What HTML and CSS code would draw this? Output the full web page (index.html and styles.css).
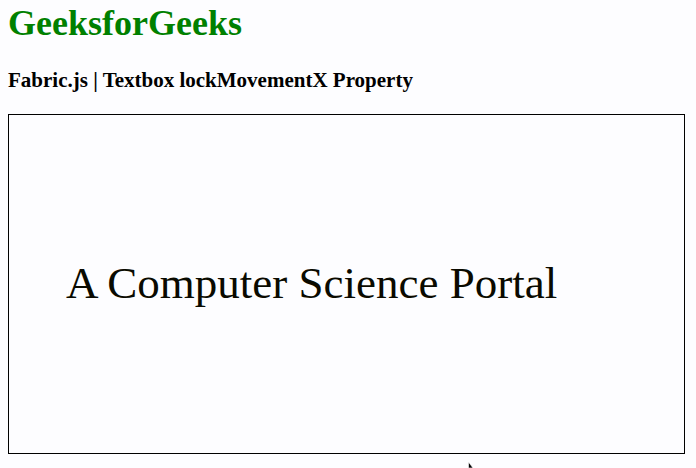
FILE: index.html
```html
<!DOCTYPE html>
<html>
<head>
<meta charset="utf-8">
<title>Fabric.js | Textbox lockMovementX Property</title>
<link rel="stylesheet" href="styles.css">
</head>
<body>
<h1 class="title">GeeksforGeeks</h1>
<h3 class="subtitle">Fabric.js | Textbox lockMovementX Property</h3>
<div class="canvas">
  <div class="textbox">A Computer Science Portal</div>
</div>
<svg class="cursor" width="8" height="6" viewBox="0 0 8 6"><path d="M0.5 0 L0.5 6 L5 6 Z" fill="#000" stroke="#fff" stroke-width="0.6"/></svg>
</body>
</html>
```
FILE: styles.css
```css
html, body {
  margin: 0;
  padding: 0;
  overflow: hidden;
}
body {
  background: #fdfdff;
  padding: 0 8px;
  font-family: "Liberation Serif", "Times New Roman", serif;
  color: #000;
  position: relative;
  height: 468px;
  box-sizing: border-box;
}
.title {
  margin: 0;
  padding-top: 3px;
  font-size: 36px;
  line-height: 40px;
  font-weight: bold;
  color: #008000;
}
.subtitle {
  margin: 25px 0 0;
  font-size: 21px;
  line-height: 24px;
  font-weight: bold;
}
.canvas {
  margin-top: 22px;
  width: 675px;
  height: 338px;
  border: 1px solid #000;
  box-sizing: content-box;
}
.textbox {
  padding: 142px 0 0 57px;
  font-size: 45px;
  line-height: 52px;
  color: #0a0a00;
  white-space: nowrap;
}
.cursor {
  position: absolute;
  left: 468px;
  top: 462px;
}
```
